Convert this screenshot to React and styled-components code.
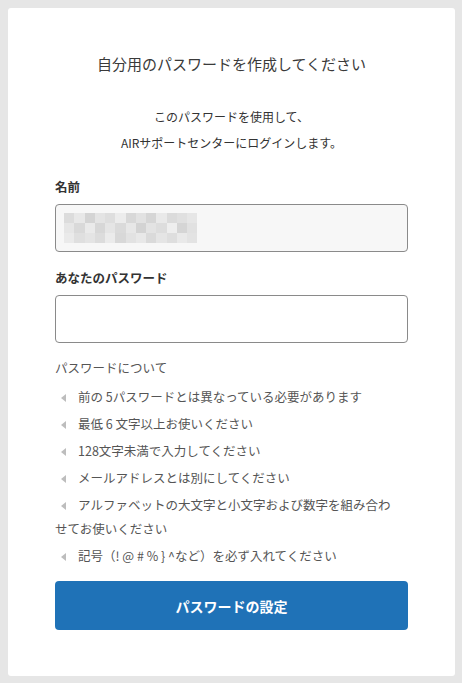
import React from "react";
import styled, { createGlobalStyle } from "styled-components";

const Global = createGlobalStyle`
  html, body { margin: 0; padding: 0; background: #e6e6e6; }
  body { font-family: "Noto Sans CJK JP", "Noto Sans", sans-serif; color: #333; }
  * { box-sizing: border-box; }
`;

const Frame = styled.div`
  width: 462px;
  height: 683px;
  padding: 8px 7px 7px 8px;
  background: #e6e6e6;
`;

const Card = styled.main`
  height: 100%;
  background: #fff;
  border-radius: 3px;
  padding: 42px 47px 0 47px;
  display: flex;
  flex-direction: column;
`;

const Title = styled.h1`
  margin: 0;
  font-size: 15px;
  font-weight: 400;
  text-align: center;
  color: #3a3a3a;
  line-height: 28px;
`;

const Lead = styled.p`
  margin: 26px 0 0;
  font-size: 12px;
  line-height: 26px;
  text-align: center;
  color: #333;
`;

const Label = styled.label`
  display: block;
  margin-top: ${p => p.$top}px;
  font-size: 12.5px;
  font-weight: 700;
  line-height: 20px;
  color: #333;
`;

const Field = styled.div`
  margin-top: 7px;
  height: 48px;
  flex: 0 0 48px;
  border: 1px solid #8a8a8a;
  border-radius: 4px;
  background: ${p => (p.$filled ? "#f7f7f7" : "#fff")};
  padding: 7px 8px;
  display: flex;
  align-items: center;
`;

const Mosaic = styled.div`
  display: grid;
  grid-template-columns: repeat(13, 10.25px);
  grid-template-rows: repeat(3, 10px);
`;

const Cell = styled.span`
  display: block;
  background: ${p => p.$c};
`;

const Note = styled.div`
  margin-top: 15px;
  font-size: 12.5px;
  line-height: 20px;
  color: #555;
`;

const Rules = styled.ul`
  list-style: none;
  margin: 7px 0 0;
  padding: 0 8px 0 0;
`;

const Rule = styled.li`
  font-size: 12.5px;
  line-height: 24px;
  color: #555;
  margin-bottom: 3px;
`;

const Mark = styled.span`
  display: inline-block;
  width: 0;
  height: 0;
  margin: 0 12px 1px 6px;
  border-top: 4px solid transparent;
  border-bottom: 4px solid transparent;
  border-right: 5px solid #bdbdbd;
  vertical-align: middle;
`;

const Submit = styled.button`
  margin-top: 10px;
  height: 49px;
  flex: 0 0 49px;
  width: 100%;
  border: none;
  border-radius: 4px;
  background: #1f72b7;
  color: #fff;
  font-family: inherit;
  font-size: 14px;
  font-weight: 700;
  cursor: pointer;
`;

const shades = [
  "#dcdcdc","#e8e8e8","#d4d4d4","#e4e4e4","#dedede","#ececec","#d8d8d8","#e2e2e2","#d6d6d6","#e9e9e9","#dbdbdb","#e0e0e0","#e6e6e6",
  "#e6e6e6","#d9d9d9","#eaeaea","#d7d7d7","#e5e5e5","#dadada","#e7e7e7","#d3d3d3","#e3e3e3","#dddddd","#eeeeee","#d5d5d5","#e1e1e1",
  "#eaeaea","#dfdfdf","#e4e4e4","#dcdcdc","#ebebeb","#d8d8d8","#e2e2e2","#e8e8e8","#dadada","#e5e5e5","#dedede","#e9e9e9","#e3e3e3",
];

const rules = [
  "前の 5パスワードとは異なっている必要があります",
  "最低 6 文字以上お使いください",
  "128文字未満で入力してください",
  "メールアドレスとは別にしてください",
  "アルファベットの大文字と小文字および数字を組み合わせてお使いください",
  "記号（! @ # % } ^など）を必ず入れてください",
];

export default function App() {
  return (
    <Frame>
      <Global />
      <Card>
        <Title>自分用のパスワードを作成してください</Title>
        <Lead>
          このパスワードを使用して、
          <br />
          AIRサポートセンターにログインします。
        </Lead>
        <Label $top={21}>名前</Label>
        <Field $filled>
          <Mosaic>
            {shades.map((c, i) => (
              <Cell key={i} $c={c} />
            ))}
          </Mosaic>
        </Field>
        <Label $top={16}>あなたのパスワード</Label>
        <Field />
        <Note>パスワードについて</Note>
        <Rules>
          {rules.map(r => (
            <Rule key={r}>
              <Mark />
              {r}
            </Rule>
          ))}
        </Rules>
        <Submit>パスワードの設定</Submit>
      </Card>
    </Frame>
  );
}
